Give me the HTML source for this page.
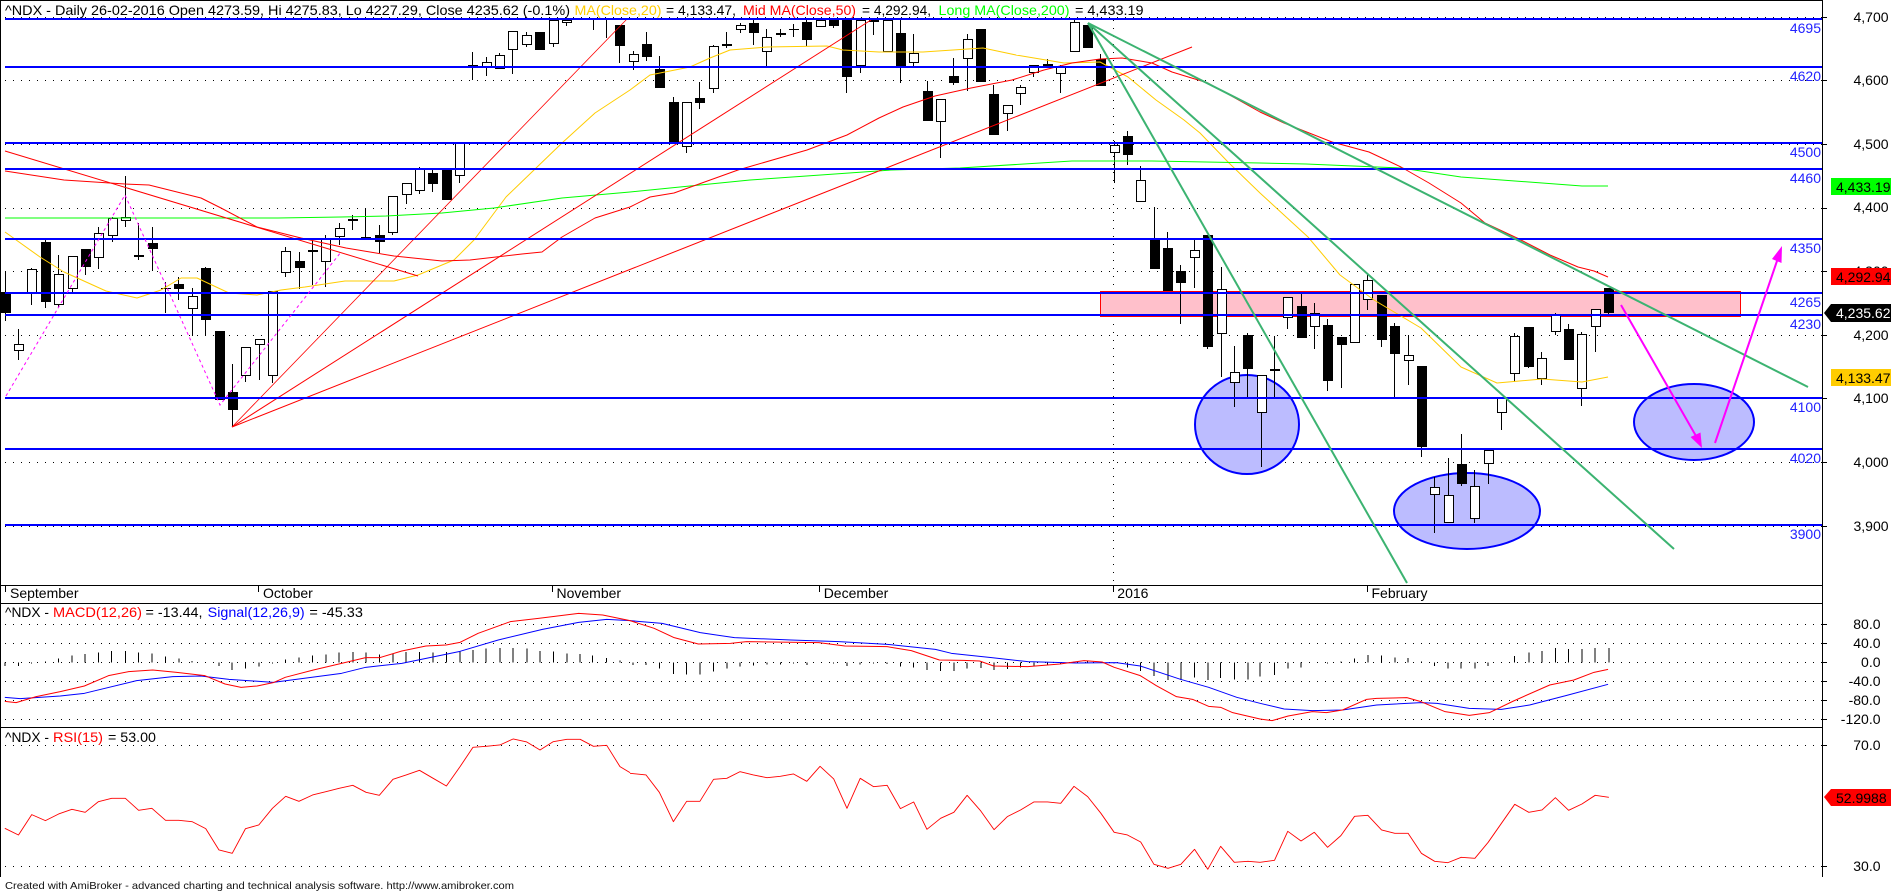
<!DOCTYPE html>
<html><head><meta charset="utf-8"><title>^NDX chart</title>
<style>
html,body{margin:0;padding:0;background:#fff;width:1891px;height:892px;overflow:hidden}
svg{display:block;position:absolute;left:0;top:0}
text{font-family:"Liberation Sans",Arial,sans-serif;font-size:14px;fill:#000}
.b{fill:#2222ff}
</style></head><body>
<svg width="1891" height="892" viewBox="0 0 1891 892" xmlns="http://www.w3.org/2000/svg">
<rect width="1891" height="892" fill="#fff"/>
<!-- grid dots -->
<g stroke="#000" stroke-width="1" stroke-dasharray="1 7" fill="none" shape-rendering="crispEdges">
<path d="M5 17.5H1823M5 80.5H1823M5 144.5H1823M5 208.5H1823M5 271.5H1823M5 335.5H1823M5 398.5H1823M5 462.5H1823M5 526.5H1823"/>
<path d="M5 624.5H1823M5 643.5H1823M5 662.5H1823M5 681.5H1823M5 700.5H1823M5 719.5H1823M5 745.5H1823M5 866.5H1823"/>
<path d="M1113.5 20V585"/>
</g>
<!-- pink zone and ellipses -->
<rect x="1100.5" y="291.5" width="640" height="25" fill="#ffc0cb" stroke="#f00" stroke-width="1"/>
<g fill="#bcbcff" stroke="#00f" stroke-width="2">
<ellipse cx="1247" cy="424.5" rx="52" ry="49.5"/>
<ellipse cx="1467" cy="511" rx="73" ry="38"/>
<ellipse cx="1694" cy="422" rx="60" ry="38"/>
</g>
<!-- wicks -->
<path shape-rendering="crispEdges" stroke="#000" stroke-width="1" fill="none" d="M5.5 272V321M18.5 329V360M31.5 268V305M45.5 240V308M58.5 255V307M72.5 256V292M85.5 249V275M98.5 227V269M112.5 217V242M125.5 176V227M138.5 223V260M152.5 227V271M165.5 282V313M178.5 277V300M192.5 288V336M205.5 267V335M219.5 331V400M232.5 364V427M245.5 347V382M259.5 339V380M272.5 291V383M285.5 247V277M299.5 252V289M312.5 239V285M325.5 235V287M339.5 223V245M352.5 215V230M365.5 209V238M379.5 225V253M392.5 196V235M406.5 183V204M419.5 167V194M432.5 170V192M446.5 168V200M459.5 143V183M472.5 52V80M486.5 57V76M499.5 53V69M512.5 31V74M526.5 32V47M539.5 32V50M553.5 20V47M566.5 20V26M593.5 20V30M606.5 20V38M619.5 25V63M633.5 51V70M646.5 32V61M659.5 56V88M673.5 97V143M686.5 102V153M699.5 82V109M713.5 45V93M726.5 32V48M740.5 23V33M753.5 20V45M766.5 29V66M780.5 29V37M793.5 24V37M806.5 20V46M820.5 20V27M833.5 20V28M846.5 20V93M860.5 20V73M873.5 20V35M887.5 20V52M900.5 20V83M913.5 34V66M927.5 81V121M940.5 99V158M953.5 58V85M967.5 34V91M980.5 29V82M993.5 85V135M1007.5 105V131M1020.5 85V105M1033.5 65V77M1047.5 59V67M1060.5 65V93M1074.5 20V52M1087.5 25V48M1100.5 54V86M1114.5 141V183M1127.5 131V165M1140.5 166V202M1154.5 207V269M1167.5 232V291M1180.5 265V324M1194.5 239V288M1207.5 235V349M1221.5 267V377M1234.5 346V407M1247.5 333V397M1261.5 375V467M1274.5 336V397M1287.5 297V329M1301.5 293V338M1314.5 303V349M1327.5 319V391M1341.5 337V388M1354.5 284V343M1367.5 273V310M1381.5 295V347M1394.5 323V397M1408.5 335V385M1421.5 366V457M1434.5 477V533M1448.5 458V523M1461.5 434V486M1474.5 470V523M1488.5 450V484M1501.5 397V430M1514.5 333V382M1528.5 327V368M1541.5 352V385M1555.5 313V335M1568.5 324V360M1581.5 332V406M1595.5 309V352M1608.5 288V314"/>
<!-- black bodies -->
<path shape-rendering="crispEdges" fill="#000" d="M1 292h10v21h-10zM41 242h10v60h-10zM81 249h10v18h-10zM134 255h10v2h-10zM148 243h10v6h-10zM161 288h10v1h-10zM174 284h10v5h-10zM201 268h10v52h-10zM215 331h10v69h-10zM228 392h10v18h-10zM295 261h10v7h-10zM308 250h10v2h-10zM361 237h10v2h-10zM375 235h10v7h-10zM428 173h10v11h-10zM442 170h10v30h-10zM468 65h10v1h-10zM535 32h10v18h-10zM615 25h10v21h-10zM642 44h10v13h-10zM655 69h10v19h-10zM669 102h10v41h-10zM695 98h10v5h-10zM722 44h10v2h-10zM749 23h10v10h-10zM776 33h10v2h-10zM789 29h10v1h-10zM802 22h10v18h-10zM829 20h10v6h-10zM842 20h10v57h-10zM869 20h10v2h-10zM896 33h10v34h-10zM923 91h10v30h-10zM949 76h10v7h-10zM976 29h10v53h-10zM989 94h10v41h-10zM1043 64h10v3h-10zM1083 25h10v23h-10zM1096 59h10v27h-10zM1123 136h10v19h-10zM1150 239h10v30h-10zM1163 248h10v43h-10zM1176 271h10v12h-10zM1203 235h10v112h-10zM1243 335h10v34h-10zM1270 369h10v2h-10zM1297 306h10v32h-10zM1323 325h10v56h-10zM1337 337h10v8h-10zM1377 295h10v45h-10zM1390 326h10v28h-10zM1417 366h10v81h-10zM1457 464h10v20h-10zM1524 327h10v40h-10zM1564 329h10v31h-10zM1604 288h10v25h-10z"/>
<!-- white bodies -->
<path shape-rendering="crispEdges" fill="#fff" stroke="#000" stroke-width="1" d="M14.5 344.5h9v6h-9zM27.5 269.5h9v23h-9zM54.5 274.5h9v30h-9zM68.5 256.5h9v32h-9zM94.5 233.5h9v24h-9zM108.5 218.5h9v17h-9zM121.5 217.5h9v3h-9zM188.5 296.5h9v12h-9zM241.5 347.5h9v28h-9zM255.5 339.5h9v5h-9zM268.5 291.5h9v84h-9zM281.5 251.5h9v21h-9zM321.5 239.5h9v22h-9zM335.5 228.5h9v8h-9zM348.5 219.5h9v1h-9zM388.5 196.5h9v36h-9zM402.5 183.5h9v11h-9zM415.5 168.5h9v22h-9zM455.5 143.5h9v32h-9zM482.5 62.5h9v4h-9zM495.5 55.5h9v13h-9zM508.5 31.5h9v18h-9zM522.5 35.5h9v9h-9zM549.5 20.5h9v23h-9zM562.5 20.5h9v2h-9zM629.5 54.5h9v7h-9zM682.5 102.5h9v44h-9zM709.5 46.5h9v42h-9zM736.5 25.5h9v4h-9zM762.5 37.5h9v14h-9zM816.5 20.5h9v6h-9zM856.5 20.5h9v45h-9zM883.5 20.5h9v31h-9zM909.5 53.5h9v9h-9zM936.5 99.5h9v22h-9zM963.5 39.5h9v19h-9zM1003.5 105.5h9v8h-9zM1016.5 87.5h9v6h-9zM1029.5 65.5h9v7h-9zM1056.5 67.5h9v6h-9zM1070.5 22.5h9v29h-9zM1110.5 145.5h9v7h-9zM1136.5 180.5h9v21h-9zM1190.5 250.5h9v7h-9zM1217.5 289.5h9v44h-9zM1230.5 372.5h9v10h-9zM1257.5 375.5h9v37h-9zM1283.5 297.5h9v20h-9zM1310.5 313.5h9v13h-9zM1350.5 284.5h9v58h-9zM1363.5 280.5h9v19h-9zM1404.5 355.5h9v5h-9zM1430.5 487.5h9v7h-9zM1444.5 495.5h9v27h-9zM1470.5 486.5h9v32h-9zM1484.5 450.5h9v13h-9zM1497.5 397.5h9v15h-9zM1510.5 336.5h9v37h-9zM1537.5 358.5h9v20h-9zM1551.5 314.5h9v17h-9zM1577.5 334.5h9v54h-9zM1591.5 309.5h9v17h-9z"/>
<!-- moving averages -->
<g fill="none" stroke-linejoin="round">
<polyline stroke="#ffcc00" stroke-width="1" points="5,232 40,257 64,272 106,291 137,298 161,290 181,278 197,278 229,293 257,295 281,290 305,287 345,281 394,281 418,275 454,260 474,240 506,197 534,170 562,143 595,113 630,90 650,75 690,67 710,58 730,50 767,47 827,46 843,50 879,52 923,52 983,48 1016,55 1064,63 1100,62 1128,77 1156,100 1184,120 1200,133 1229,163 1260,193 1308,237 1340,275 1374,300 1421,328 1461,367 1497,383 1542,379 1582,382 1608,377"/>
<polyline stroke="#00ff00" stroke-width="1" points="5,218 278,218 341,217 386,216 442,213 494,208 562,198 630,192 750,180 891,170 960,168 1072,161 1152,161 1260,163 1306,164 1401,168 1461,177 1582,186 1608,186"/>
<polyline stroke="#f00" stroke-width="1" points="5,171 64,180 125,184 149,185 201,198 221,208 257,227 301,238 346,248 394,256 442,261 470,260 522,254 542,252 562,237 595,218 630,207 650,197 674,193 738,170 807,150 847,135 879,118 903,107 935,96 971,88 1012,80 1044,70 1072,63 1100,59 1122,58 1152,63 1172,72 1208,83 1260,112 1284,123 1332,142 1369,152 1401,167 1429,183 1461,203 1485,223 1517,238 1550,255 1578,267 1594,271 1608,277"/>
</g>
<!-- red fan and trendline -->
<g stroke="#f00" fill="none">
<path stroke-width=".8" d="M232 427L627 19"/>
<path stroke-width="1" d="M232 427L871 20"/>
<path stroke-width="1" d="M232 427L1192 47"/>
<path stroke-width="1" d="M5 151L418 276"/>
</g>
<!-- horizontal levels -->
<g fill="#00f" shape-rendering="crispEdges">
<rect x="5" y="18" width="1817" height="2"/><rect x="5" y="66" width="1817" height="2"/><rect x="5" y="142" width="1817" height="2"/><rect x="5" y="168" width="1817" height="2"/><rect x="5" y="238" width="1817" height="2"/><rect x="5" y="292" width="1817" height="2"/><rect x="5" y="314" width="1817" height="2"/><rect x="5" y="397" width="1817" height="2"/><rect x="5" y="448" width="1817" height="2"/><rect x="5" y="524" width="1817" height="2"/>
</g>
<!-- zigzag -->
<polyline fill="none" stroke="#ff00ff" stroke-width="1" stroke-dasharray="3 3" points="6,396 125,195 220,405 341,252"/>
<!-- green fan -->
<g stroke="#3cb371" stroke-width="2" fill="none">
<path d="M1088 23L1407 583"/><path d="M1088 23L1674 549"/><path d="M1088 23L1808 387"/>
</g>
<!-- magenta arrows -->
<g stroke="#ff00ff" stroke-width="2" fill="none"><path d="M1621 305L1700 443"/><path d="M1715 443L1778 258"/></g>
<g fill="#ff00ff"><path d="M1702 448L1690.5 437L1700.5 432.5Z"/><path d="M1782 246L1772 259L1781.5 263Z"/></g>
<!-- frame -->
<g fill="#000" shape-rendering="crispEdges">
<rect x="0" y="0" width="1823" height="1"/><rect x="0" y="0" width="1" height="877"/><rect x="1822" y="0" width="1" height="877"/>
<rect x="0" y="585" width="1823" height="1"/><rect x="0" y="603" width="1823" height="1"/><rect x="0" y="727" width="1823" height="1"/>
<rect x="5" y="586" width="1" height="6"/><rect x="258" y="586" width="1" height="6"/><rect x="552" y="586" width="1" height="6"/><rect x="819" y="586" width="1" height="6"/><rect x="1113" y="586" width="1" height="6"/><rect x="1367" y="586" width="1" height="6"/>
</g>
<path shape-rendering="crispEdges" stroke="#000" d="M1823 17.5h4M1823 80.5h4M1823 144.5h4M1823 208.5h4M1823 271.5h4M1823 335.5h4M1823 398.5h4M1823 462.5h4M1823 526.5h4M1823 624.5h4M1823 643.5h4M1823 662.5h4M1823 681.5h4M1823 700.5h4M1823 719.5h4M1823 745.5h4M1823 866.5h4"/>
<!-- MACD histogram -->
<g stroke="#000" stroke-width="1" fill="none" shape-rendering="crispEdges">
<g transform="translate(0,590) scale(.4018,.3333)"><path vector-effect="non-scaling-stroke" d="M12 217V228M46 217V228M79 217V220M113 217V214M146 217V205M179 217V197M212 217V192M245 217V187M278 217V183M312 217V183M345 217V188M378 217V191M412 217V200M445 217V205M478 217V213M512 217V216M545 217V228M578 217V240M611 217V236M644 217V230M678 217V220M711 217V208M744 217V203M778 217V197M811 217V193M844 217V188M878 217V186M911 217V188M944 217V193M978 217V190M1011 217V186M1044 217V186M1078 217V188M1111 217V186M1145 217V184M1177 217V180M1210 217V176M1244 217V174M1277 217V174M1311 217V176M1344 217V183M1377 217V185M1411 217V190M1444 217V192M1474 217V196M1509 217V204M1543 217V212"/></g>
<g transform="translate(630,590) scale(.4018,.3333)"><path vector-effect="non-scaling-stroke" d="M7 217V225M40 217V225M73 217V236M108 217V252M141 217V254M174 217V254M208 217V245M241 217V236M274 217V230M307 217V226M341 217V223M374 217V224M407 217V220M440 217V225M473 217V218M507 217V220M540 217V228M573 217V224M606 217V220M640 217V222M673 217V230M706 217V232M739 217V240M773 217V243M806 217V243M839 217V236M873 217V234M906 217V240M939 217V237M972 217V232M1005 217V228M1039 217V224M1072 217V220M1105 217V214M1139 217V212M1172 217V214M1205 217V220M1238 217V232M1271 217V243M1304 217V258M1339 217V270M1371 217V270M1405 217V262M1438 217V270M1470 217V264M1504 217V268M1538 217V268"/></g>
<g transform="translate(1260,590) scale(.4024,.3333)"><path vector-effect="non-scaling-stroke" d="M0 217V260M36 217V255M69 217V236M102 217V232M135 217V218M168 217V220M201 217V215M235 217V205M268 217V195M302 217V197M335 217V202M368 217V204M401 217V215M434 217V228M467 217V236M500 217V236M534 217V236M567 217V228M600 217V219M633 217V198M668 217V188M701 217V183M734 217V174M767 217V177M800 217V177M833 217V174M867 217V174"/></g>
</g>
<!-- MACD / Signal / RSI -->
<g fill="none" stroke-linejoin="round">
<g transform="translate(0,590) scale(.4018,.3333)">
<polyline vector-effect="non-scaling-stroke" stroke="#00f" stroke-width="1" points="12,322 50,326 150,318 210,310 340,272 430,260 500,258 570,268 680,277 850,250 910,232 1000,220 1145,184 1240,150 1350,118 1440,97 1510,88 1568,92"/>
<polyline vector-effect="non-scaling-stroke" stroke="#f00" stroke-width="1" points="12,334 40,338 90,320 150,305 210,288 270,257 320,245 380,240 440,247 510,257 560,282 600,292 640,288 680,278 710,262 780,240 850,220 910,203 945,203 1000,183 1060,168 1110,165 1145,157 1190,130 1270,95 1340,85 1440,70 1500,75 1568,92"/>
<polyline vector-effect="non-scaling-stroke" stroke="#f00" stroke-width=".9" points="12,715 46,735 79,674 113,692 146,672 179,658 212,667 245,635 278,625 312,625 345,661 378,655 412,691 445,691 478,695 512,716 545,780 578,790 611,716 644,705 678,655 711,619 744,634 778,615 811,605 844,595 878,586 911,607 944,616 978,568 1011,555 1044,541 1078,565 1111,588 1145,530 1177,472 1210,469 1244,465 1277,447 1311,456 1344,480 1377,455 1411,448 1444,448 1477,469 1510,466 1543,530 1568,548"/>
</g>
<g transform="translate(630,590) scale(.4018,.3333)">
<polyline vector-effect="non-scaling-stroke" stroke="#00f" stroke-width="1" points="0,92 80,100 175,128 260,143 400,150 520,155 640,163 760,178 800,190 900,203 990,215 1110,219 1210,218 1270,228 1370,268 1440,292 1510,322 1568,340"/>
<polyline vector-effect="non-scaling-stroke" stroke="#f00" stroke-width="1" points="0,92 60,115 110,143 170,162 250,160 290,155 470,158 535,168 640,170 700,182 770,210 830,211 870,213 905,228 990,230 1070,222 1130,212 1175,216 1205,232 1270,257 1310,287 1360,320 1400,328 1440,349 1470,352 1500,368 1568,387"/>
<polyline vector-effect="non-scaling-stroke" stroke="#f00" stroke-width=".9" points="0,550 40,555 73,607 108,695 141,634 174,634 208,568 241,565 274,545 307,555 341,563 374,559 407,552 440,574 473,529 507,567 540,655 573,565 606,590 640,586 673,656 706,636 739,718 773,685 806,667 839,616 873,663 906,719 939,680 972,660 1005,636 1039,636 1072,640 1105,589 1139,620 1172,670 1205,727 1238,735 1271,756 1304,823 1339,835 1371,823 1405,778 1438,838 1470,769 1504,817 1538,814 1568,817"/>
</g>
<g transform="translate(1260,590) scale(.4024,.3333)">
<polyline vector-effect="non-scaling-stroke" stroke="#00f" stroke-width="1" points="0,340 60,357 130,362 205,360 290,345 400,338 440,340 520,355 600,358 670,345 760,317 865,283"/>
<polyline vector-effect="non-scaling-stroke" stroke="#f00" stroke-width="1" points="0,387 30,392 70,378 130,365 165,368 205,360 265,328 290,325 365,323 400,335 460,365 520,376 570,368 630,333 720,285 780,270 830,247 865,238"/>
<polyline vector-effect="non-scaling-stroke" stroke="#f00" stroke-width=".9" points="0,817 36,811 69,724 102,753 135,727 168,772 201,737 235,679 268,676 302,720 335,730 368,730 401,790 434,814 467,818 500,802 534,805 567,757 600,700 633,643 668,667 701,660 734,623 767,661 800,642 833,616 867,622"/>
</g>
</g>
<!-- titles -->
<text x="5" y="15" textLength="565" lengthAdjust="spacingAndGlyphs">^NDX - Daily 26-02-2016 Open 4273.59, Hi 4275.83, Lo 4227.29, Close 4235.62 (-0.1%)</text>
<text x="574.5" y="15" textLength="87" lengthAdjust="spacingAndGlyphs" style="fill:#ffcc00">MA(Close,20)</text>
<text x="666" y="15" textLength="70" lengthAdjust="spacingAndGlyphs">= 4,133.47,</text>
<text x="743" y="15" textLength="113" lengthAdjust="spacingAndGlyphs" style="fill:#f00">Mid MA(Close,50)</text>
<text x="862" y="15" textLength="69" lengthAdjust="spacingAndGlyphs">= 4,292.94,</text>
<text x="938.5" y="15" textLength="131" lengthAdjust="spacingAndGlyphs" style="fill:#00ff00">Long MA(Close,200)</text>
<text x="1075" y="15" textLength="68.5" lengthAdjust="spacingAndGlyphs">= 4,433.19</text>
<text x="5" y="617" textLength="44" lengthAdjust="spacingAndGlyphs">^NDX -</text>
<text x="53" y="617" textLength="89" lengthAdjust="spacingAndGlyphs" style="fill:#f00">MACD(12,26)</text>
<text x="145.5" y="617" textLength="57" lengthAdjust="spacingAndGlyphs">= -13.44,</text>
<text x="207.7" y="617" textLength="97" lengthAdjust="spacingAndGlyphs" style="fill:#00f">Signal(12,26,9)</text>
<text x="309.4" y="617" textLength="53.5" lengthAdjust="spacingAndGlyphs">= -45.33</text>
<text x="5" y="742" textLength="44" lengthAdjust="spacingAndGlyphs">^NDX -</text>
<text x="53" y="742" textLength="50" lengthAdjust="spacingAndGlyphs" style="fill:#f00">RSI(15)</text>
<text x="108" y="742" textLength="48" lengthAdjust="spacingAndGlyphs">= 53.00</text>
<!-- months -->
<text x="10" y="598">September</text><text x="263" y="598">October</text><text x="556.5" y="598">November</text><text x="823.7" y="598">December</text><text x="1117.3" y="598">2016</text><text x="1371.5" y="598">February</text>
<!-- level labels -->
<g text-anchor="end" class="b">
<text class="b" x="1821" y="33">4695</text><text class="b" x="1821" y="81">4620</text><text class="b" x="1821" y="157">4500</text><text class="b" x="1821" y="183">4460</text><text class="b" x="1821" y="253">4350</text><text class="b" x="1821" y="307">4265</text><text class="b" x="1821" y="329">4230</text><text class="b" x="1821" y="412">4100</text><text class="b" x="1821" y="463">4020</text><text class="b" x="1821" y="539">3900</text>
</g>
<!-- price axis -->
<text x="1853.5" y="22">4,700</text><text x="1853.5" y="85">4,600</text><text x="1853.5" y="149">4,500</text><text x="1853.5" y="212">4,400</text><text x="1853.5" y="276">4,300</text><text x="1853.5" y="340">4,200</text><text x="1853.5" y="403">4,100</text><text x="1853.5" y="467">4,000</text><text x="1853.5" y="531">3,900</text>
<g text-anchor="end">
<text x="1880.5" y="629">80.0</text><text x="1880.5" y="648">40.0</text><text x="1880.5" y="667">0.0</text><text x="1880.5" y="686">-40.0</text><text x="1880.5" y="705">-80.0</text><text x="1880.5" y="724">-120.0</text><text x="1880.5" y="750">70.0</text><text x="1880.5" y="871">30.0</text>
</g>
<!-- value boxes -->
<rect x="1831" y="178" width="60" height="17" fill="#00ff00"/><text x="1836" y="192">4,433.19</text>
<rect x="1831" y="268" width="60" height="17" fill="#f00"/><text x="1836" y="282">4,292.94</text>
<path d="M1824 313L1831 304H1891V322H1831Z" fill="#000"/><text x="1836" y="318" style="fill:#fff">4,235.62</text>
<rect x="1831" y="369" width="60" height="17" fill="#ffcc00"/><text x="1836" y="383">4,133.47</text>
<path d="M1824 797L1831 789H1891V806H1831Z" fill="#f00"/><text x="1836" y="803">52.9988</text>
<!-- footer -->
<text x="5" y="889" textLength="509" lengthAdjust="spacingAndGlyphs" style="font-size:10.5px;fill:#111">Created with AmiBroker - advanced charting and technical analysis software. http://www.amibroker.com</text>
</svg>
</body></html>
